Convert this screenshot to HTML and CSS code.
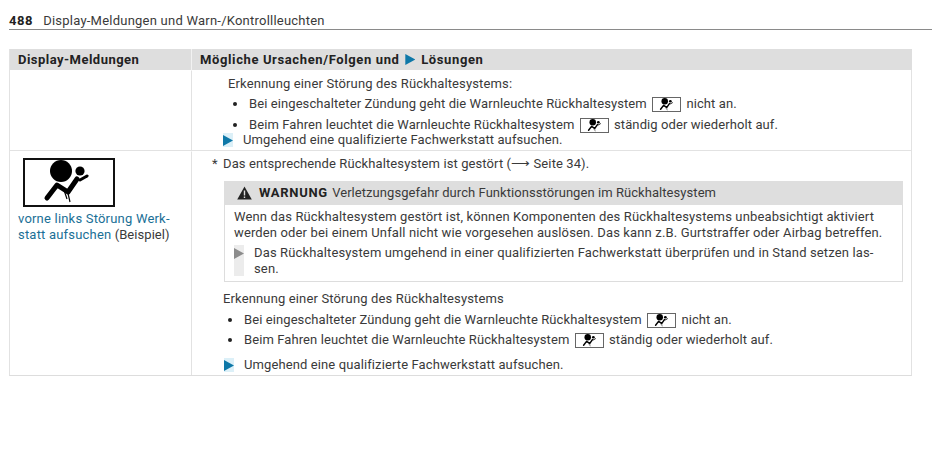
FILE: index.html
```html
<!DOCTYPE html>
<html lang="de">
<head>
<meta charset="utf-8">
<title>Display-Meldungen</title>
<link rel="stylesheet" href="styles.css">
</head>
<body>
<svg class="defs" width="0" height="0">
  <symbol id="airbag" viewBox="0 0 88 44">
    <circle cx="36" cy="11" r="11"/>
    <circle cx="55" cy="11" r="4.6"/>
    <path d="M52 19 L43 32 L32 25 L22 38" fill="none" stroke="#000" stroke-width="5" stroke-linecap="round" stroke-linejoin="round"/>
    <path d="M55 20 L62 16" fill="none" stroke="#000" stroke-width="3" stroke-linecap="round"/>
    <path d="M42 29 L45 42 M39 30 L42 39" fill="none" stroke="#000" stroke-width="1.2"/>
  </symbol>
</svg>
<header class="page-head">
  <b class="page-no">488</b><span class="page-title">Display-Meldungen und Warn-/Kontrollleuchten</span>
</header>
<main class="table">
  <div class="th col-a">Display-Meldungen</div>
  <div class="th col-b">Mögliche Ursachen/Folgen und <i class="tri tri-head"></i> Lösungen</div>

  <div class="cell col-a row-1"></div>
  <div class="cell col-b row-1 cont">
    <p class="intro">Erkennung einer Störung des Rückhaltesystems:</p>
    <ul class="bullets">
      <li>Bei eingeschalteter Zündung geht die Warnleuchte Rückhaltesystem <span class="lamp"><svg width="17" height="13" viewBox="16 0 52 44"><use href="#airbag" width="88" height="44"/></svg></span> nicht an.</li>
      <li>Beim Fahren leuchtet die Warnleuchte Rückhaltesystem <span class="lamp"><svg width="17" height="13" viewBox="16 0 52 44"><use href="#airbag" width="88" height="44"/></svg></span> ständig oder wiederholt auf.</li>
    </ul>
    <p class="action tight"><i class="tri"></i>Umgehend eine qualifizierte Fachwerkstatt aufsuchen.</p>
  </div>

  <div class="cell col-a row-2">
    <div class="display"><svg width="88" height="44"><use href="#airbag" width="88" height="44"/></svg></div>
    <p class="msg"><span class="link">vorne links Störung Werk-<br>statt aufsuchen</span> (Beispiel)</p>
  </div>
  <div class="cell col-b row-2">
    <p class="note"><span class="star">*</span>Das entsprechende Rückhaltesystem ist gestört (⟶ Seite 34).</p>
    <section class="warn">
      <h2 class="warn-head"><svg class="warn-icon" width="15" height="14" viewBox="0 0 15 14"><path d="M7.5 0.5 L14.8 13.5 H0.2 Z" fill="#222"/><path d="M7.5 4.5 V9.5 M7.5 10.5 V12" stroke="#ddd" stroke-width="1.4"/></svg><b>WARNUNG</b> Verletzungsgefahr durch Funktionsstörungen im Rückhaltesystem</h2>
      <div class="warn-body">
        <p>Wenn das Rückhaltesystem gestört ist, können Komponenten des Rückhaltesystems unbeabsichtigt aktiviert<br>werden oder bei einem Unfall nicht wie vorgesehen auslösen. Das kann z.B. Gurtstraffer oder Airbag betreffen.</p>
        <p class="warn-action"><i class="tri tri-grey"></i><span>Das Rückhaltesystem umgehend in einer qualifizierten Fachwerkstatt überprüfen und in Stand setzen las-<br>sen.</span></p>
      </div>
    </section>
    <p class="intro2">Erkennung einer Störung des Rückhaltesystems</p>
    <ul class="bullets b2">
      <li>Bei eingeschalteter Zündung geht die Warnleuchte Rückhaltesystem <span class="lamp"><svg width="17" height="13" viewBox="16 0 52 44"><use href="#airbag" width="88" height="44"/></svg></span> nicht an.</li>
      <li>Beim Fahren leuchtet die Warnleuchte Rückhaltesystem <span class="lamp"><svg width="17" height="13" viewBox="16 0 52 44"><use href="#airbag" width="88" height="44"/></svg></span> ständig oder wiederholt auf.</li>
    </ul>
    <p class="action a2"><i class="tri"></i>Umgehend eine qualifizierte Fachwerkstatt aufsuchen.</p>
  </div>
</main>
</body>
</html>
```
FILE: styles.css
```css
* { box-sizing: border-box; }
html, body { margin: 0; padding: 0; background: #fff; }
body {
  width: 950px;
  height: 467px;
  overflow: hidden;
  font-family: "Roboto", "Liberation Sans", sans-serif;
  font-size: 13px;
  line-height: 16px;
  letter-spacing: 0.14px;
  color: #3a3a3a;
  padding: 12px 0 0 9px;
}
p, ul, h2 { margin: 0; padding: 0; font: inherit; }
.defs { position: absolute; }
.page-head {
  width: 923px;
  height: 18px;
  border-bottom: 1px solid #8a8a8a;
  line-height: 17px;
}
.page-no { font-weight: 700; font-size: 13px; color: #222; margin-right: 10px; letter-spacing: 0.6px; }
.page-title { letter-spacing: 0.23px; }
.table {
  margin-top: 19px;
  width: 903px;
  display: grid;
  grid-template-columns: 181px 721px;
  border-bottom: 1px solid #ddd;
  border-left: 1px solid #e2e2e2;
  border-right: 1px solid #e2e2e2;
}
.th {
  background: #dedede;
  height: 21px;
  font-weight: 700;
  color: #222;
  line-height: 21px;
  letter-spacing: 0.47px;
  padding-left: 8px;
}
.th.col-b { border-left: 1px solid #f2f2f2; letter-spacing: 0.62px; }
.cell { border-top: 1px solid transparent; }
.col-b.cell { border-left: 1px solid #e2e2e2; }
.row-1 { height: 81px; border-bottom: 1px solid #e2e2e2; }
.row-2 { height: 224px; }
.cont { padding: 5px 0 0 36px; }
.intro { height: 18px; }
.bullets { list-style: none; }
.bullets li { position: relative; padding-left: 21px; height: 21px; line-height: 20px; letter-spacing: 0.09px; }
.bullets li::before {
  content: "";
  position: absolute;
  left: 5px;
  top: 8px;
  width: 4px;
  height: 4px;
  border-radius: 50%;
  background: #222;
}
.lamp {
  display: inline-flex;
  justify-content: center;
  align-items: center;
  width: 29px;
  height: 15px;
  margin: 0 2px;
  border: 1px solid #666;
  vertical-align: -3px;
}
.lamp svg { display: block; }
.tri {
  display: inline-block;
  position: relative;
  width: 10px;
  height: 14px;
  background: #dcf0f8;
}
.tri::before {
  content: "";
  position: absolute;
  left: 0;
  top: 2px;
  width: 10px;
  height: 11px;
  background: #0e78a8;
  clip-path: polygon(0 0, 100% 50%, 0 100%);
}
.tri-head { background: none; width: 10px; height: 12px; vertical-align: -2px; margin: 0 2px; }
.tri-head::before { top: 0; }
.tri-grey { background: #ececec; height: auto; align-self: stretch; flex: none; margin: 0 10px 0 0; }
.tri-grey::before { background: #8c8c8c; top: 3px; }
.action { display: flex; align-items: center; gap: 10px; letter-spacing: 0.11px; }
.action .tri { flex: none; }
.tight { margin: -4px 0 0 -5px; }
.display {
  width: 92px;
  height: 49px;
  margin: 6px 0 0 13px;
  border: 2px solid #111;
  background: #fff;
}
.display svg { display: block; }
.msg { padding: 4px 0 0 8px; line-height: 15.5px; letter-spacing: 0.05px; }
.link { color: #1a6f96; letter-spacing: 0.2px; }
.note { padding: 4px 0 0 20px; display: flex; height: 24px; letter-spacing: 0.1px; }
.star { width: 11px; }
.warn { margin: 5px 0 0 32px; width: 679px; }
.warn-head {
  background: #dedede;
  height: 24px;
  line-height: 24px;
  padding-left: 13px;
  display: flex;
  align-items: center;
  white-space: pre;
  letter-spacing: 0.06px;
}
.warn-head b { font-weight: 700; color: #222; margin-right: 1px; letter-spacing: 0.7px; }
.warn-icon { margin-right: 7px; }
.warn-body {
  padding: 4px 8px 5px 9px;
  border: 1px solid #ddd;
  border-top: 0;
  height: 77px;
}
.warn-body p { line-height: 15.5px; }
.warn-action { display: flex; margin-top: 5px; }
.intro2 { margin: 9px 0 0 31px; height: 19px; }
.b2 { margin-left: 31px; }
.b2 li { height: 20px; }
.a2 { margin: 7px 0 0 32px; }
```
